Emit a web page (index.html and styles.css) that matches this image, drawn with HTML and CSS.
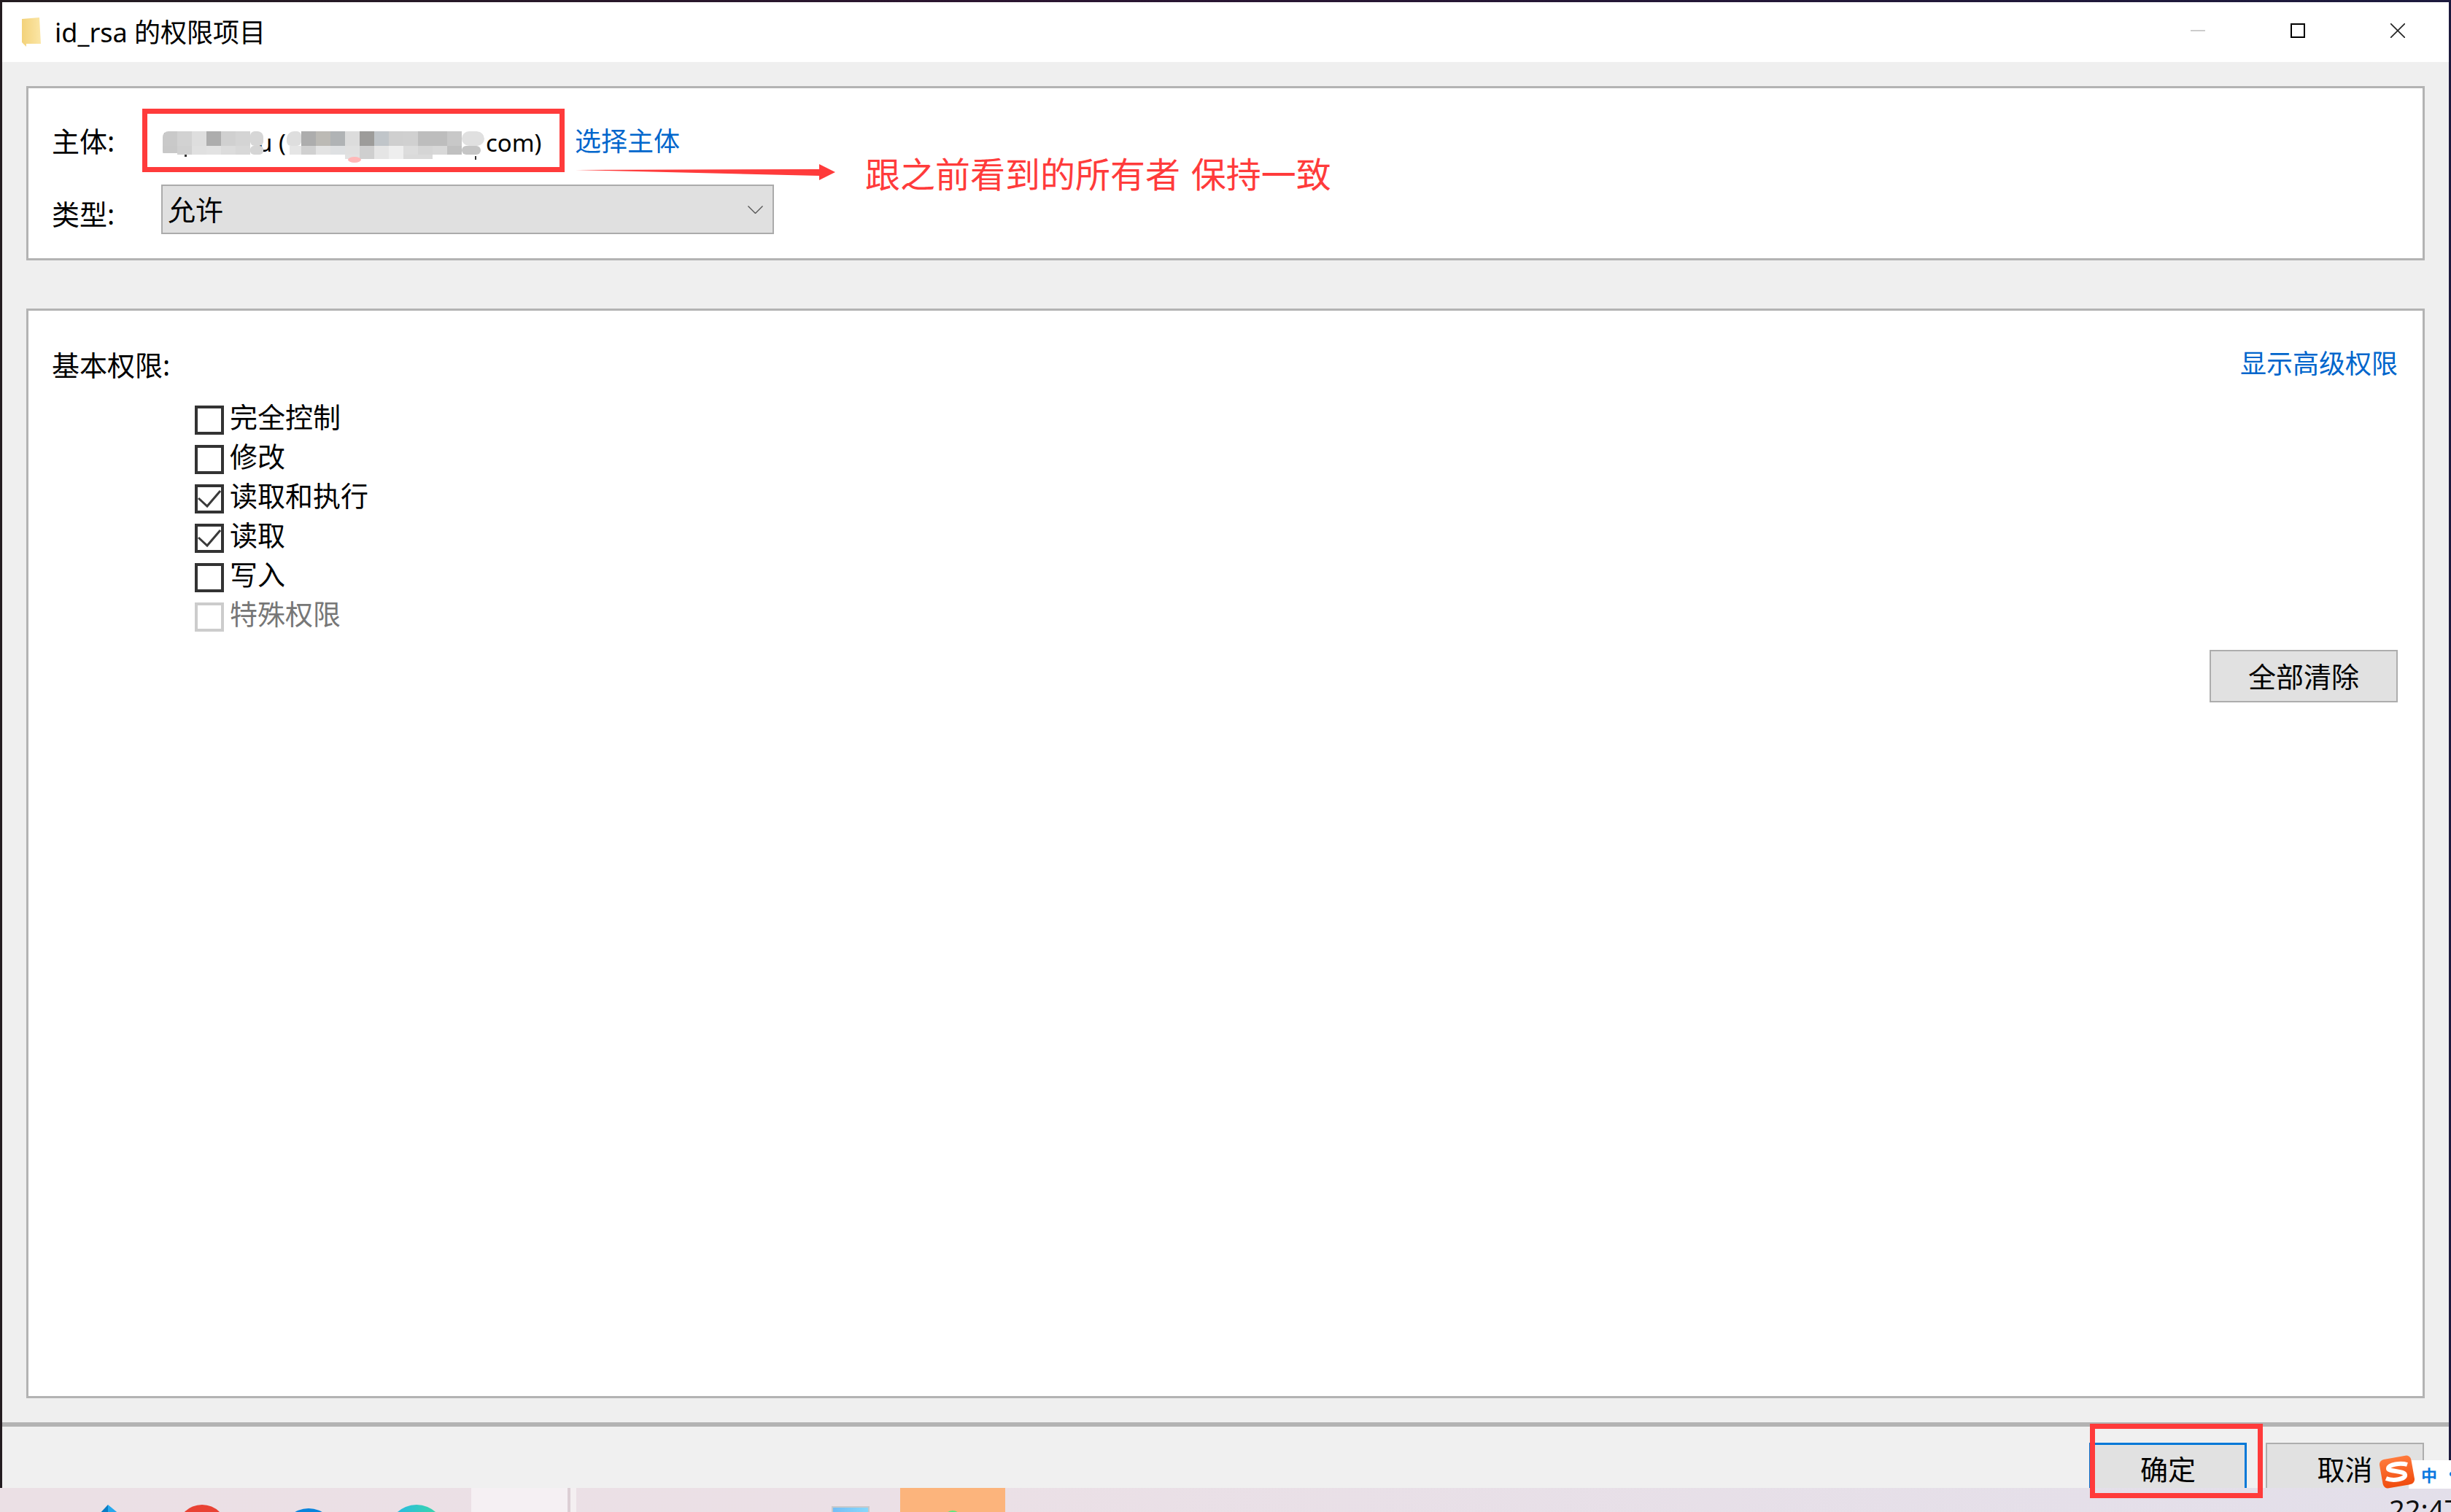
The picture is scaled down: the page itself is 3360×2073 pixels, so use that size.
FILE: index.html
```html
<!DOCTYPE html>
<html lang="zh-CN">
<head>
    <meta charset="UTF-8">
    <title>id_rsa 的权限项目</title>
    <link rel="stylesheet" href="styles.css">
</head>
<body>
<div class="desktop">
    <div class="window">
        <div class="titlebar">
            <svg class="folder" width="26" height="40" viewBox="0 0 26 40">
                <defs>
                    <linearGradient id="folderFill" x1="0" x2="1" y1="0" y2="0">
                        <stop offset="0" stop-color="#f3d27a"/>
                        <stop offset="1" stop-color="#fbe6a6"/>
                    </linearGradient>
                </defs>
                <polygon points="0,2 24,0 26,36 6,36 6,40 0,34" fill="url(#folderFill)"/>
            </svg>
            <span class="title">id_rsa 的权限项目</span>
            <div class="win-btn">
                <svg width="20" height="20" viewBox="0 0 20 20"><rect x="0" y="9" width="20" height="2" fill="#ccc"/></svg>
            </div>
            <div class="win-btn">
                <svg width="20" height="20" viewBox="0 0 20 20"><rect x="1" y="1" width="18" height="18" fill="none" stroke="#000" stroke-width="2"/></svg>
            </div>
            <div class="win-btn">
                <svg width="20" height="20" viewBox="0 0 20 20"><path d="M0 0L20 20M20 0L0 20" stroke="#222" stroke-width="1.6"/></svg>
            </div>
        </div>

        <div class="content">
            <div class="panel panel-top">
                <div class="form-row">
                    <span class="label label-who">主体:</span>
                    <div class="who">
                        <svg class="mosaic" width="138" height="36" viewBox="0 0 138 36">
                            <rect x="2" y="2" width="4" height="3" fill="#333"/><rect x="30" y="30" width="3" height="5" fill="#333"/>
                            <g class="mosaic-cells">
                                <rect x="0" width="20" height="20" fill="#c9c9c9"/><rect x="20" width="20" height="20" fill="#d2d2d2"/>
                                <rect x="40" width="20" height="20" fill="#dedede"/><rect x="60" width="20" height="20" fill="#adadad"/>
                                <rect x="80" width="20" height="20" fill="#d0d0d0"/><rect x="100" width="20" height="20" fill="#d4d4d4"/>
                                <rect x="120" width="18" height="20" rx="6" fill="#d6d6d6"/>
                                <rect x="0" y="20" width="20" height="10" fill="#c8c8c8"/><rect x="20" y="20" width="20" height="12" fill="#d0d0d0"/>
                                <rect x="40" y="20" width="20" height="12" fill="#e0e0e0"/><rect x="60" y="20" width="20" height="12" fill="#e2e2e2"/>
                                <rect x="80" y="20" width="20" height="12" fill="#dcdcdc"/><rect x="100" y="20" width="20" height="12" fill="#d8d8d8"/>
                                <rect x="120" y="20" width="18" height="12" rx="5" fill="#d5d5d5"/>
                            </g>
                        </svg>
                        <span class="who-mid">u (</span>
                        <svg class="mosaic-wide" width="271" height="44" viewBox="0 0 271 44">
                            <rect x="258" y="34" width="2" height="5" fill="#333"/>
                            <rect x="0" width="20" height="20" rx="6" fill="#dedede"/><rect x="20" width="20" height="20" fill="#adadad"/>
                            <rect x="40" width="20" height="20" fill="#bcbab5"/><rect x="60" width="20" height="20" fill="#b0b3b5"/>
                            <rect x="80" width="20" height="20" fill="#dcdcdc"/><rect x="100" width="20" height="20" fill="#9d9c9a"/>
                            <rect x="120" width="20" height="20" fill="#c0c5c9"/><rect x="140" width="20" height="20" fill="#cfcfcf"/>
                            <rect x="160" width="20" height="20" fill="#d0d0d0"/><rect x="180" width="20" height="20" fill="#bdbdbd"/>
                            <rect x="200" width="20" height="20" fill="#bdbdbd"/><rect x="220" width="20" height="20" fill="#c8c8c8"/>
                            <rect x="240" rx="10" width="31" height="20" fill="#e0e0e0"/>
                            <rect x="4" y="20" width="16" height="12" fill="#e5e5e5"/><rect x="20" y="20" width="20" height="12" fill="#d0d0d0"/>
                            <rect x="40" y="20" width="20" height="12" fill="#e3e3e3"/><rect x="60" y="20" width="20" height="12" fill="#dee0e2"/>
                            <rect x="80" y="20" width="20" height="12" fill="#e0e0e0"/><rect x="100" y="20" width="20" height="12" fill="#cfcfcf"/>
                            <rect x="120" y="20" width="20" height="12" fill="#e5e5e5"/><rect x="140" y="20" width="20" height="12" fill="#eee"/>
                            <rect x="160" y="20" width="20" height="12" fill="#dcdcdc"/><rect x="180" y="20" width="20" height="12" fill="#d5d5d5"/>
                            <rect x="200" y="20" width="20" height="12" fill="#d8d8d8"/><rect x="220" y="20" width="20" height="12" fill="#c0c0c0"/>
                            <rect x="240" y="20" width="26" height="12" rx="6" fill="#c5c5c5"/>
                            <rect x="80" y="32" width="20" height="6" fill="#e2e2e2"/><rect x="100" y="32" width="20" height="6" fill="#cfcfcf"/>
                            <rect x="120" y="32" width="20" height="6" fill="#e5e5e5"/><rect x="140" y="32" width="20" height="6" fill="#eee"/>
                            <rect x="160" y="32" width="40" height="6" fill="#dadada"/>
                            <ellipse cx="93" cy="39" rx="9" ry="4" fill="#ffb8b8"/>
                        </svg>
                        <span class="who-end">com)</span>
                    </div>
                    <a class="link pick-link">选择主体</a>
                </div>
                <div class="form-row form-row-type">
                    <span class="label label-type">类型:</span>
                    <div class="select">
                        <span class="select-value">允许</span>
                        <svg width="21" height="11" viewBox="0 0 21 11"><path d="M0.5 0.5L10.5 10.5L20.5 0.5" fill="none" stroke="#555" stroke-width="1.4"/></svg>
                    </div>
                </div>
            </div>

            <div class="panel panel-main">
                <div class="perm-head">
                    <span class="label perm-title">基本权限:</span>
                    <a class="link perm-more">显示高级权限</a>
                </div>
                <ul class="perm-list">
                    <li class="perm"><span class="box"></span><span>完全控制</span></li>
                    <li class="perm"><span class="box"></span><span>修改</span></li>
                    <li class="perm">
                        <span class="box"><svg width="32" height="32" viewBox="0 0 32 32"><path d="M1 15L13 26L31 5" fill="none" stroke="#3a3a3a" stroke-width="3"/></svg></span>
                        <span>读取和执行</span>
                    </li>
                    <li class="perm">
                        <span class="box"><svg width="32" height="32" viewBox="0 0 32 32"><path d="M1 15L13 26L31 5" fill="none" stroke="#3a3a3a" stroke-width="3"/></svg></span>
                        <span>读取</span>
                    </li>
                    <li class="perm"><span class="box"></span><span>写入</span></li>
                    <li class="perm perm-disabled"><span class="box"></span><span>特殊权限</span></li>
                </ul>
                <button class="btn btn-clear" type="button">全部清除</button>
            </div>
        </div>

        <div class="separator"></div>
        <div class="footer">
            <button class="btn btn-ok" type="button">确定</button>
            <button class="btn btn-cancel" type="button">取消</button>
        </div>
    </div>

    <div class="taskbar">
        <svg class="tb-icon tb-arrow" width="30" height="30" viewBox="0 0 30 30">
            <polygon points="13,0 13,30 0,30 0,14" fill="#0a7cc4"/>
            <polygon points="13,0 30,14 30,30 13,30" fill="#27a9ee"/>
        </svg>
        <span class="tb-icon tb-red"></span>
        <span class="tb-icon tb-blue"></span>
        <span class="tb-icon tb-teal"></span>
        <span class="tb-active"></span>
        <span class="tb-sep"></span>
        <span class="tb-icon tb-file"></span>
        <span class="tb-orange"><span class="tb-green"></span></span>
        <span class="clock">22:47</span>
    </div>

    <!-- red marks drawn over the screenshot -->
    <div class="mark mark-who"></div>
    <div class="mark mark-ok"></div>
    <svg class="mark-arrow" width="360" height="32" viewBox="0 0 360 32">
        <polygon points="0,13 334,12 334,5 356,16 334,27 334,21" fill="#ff3b3b"/>
    </svg>
    <div class="note">跟之前看到的所有者 保持一致</div>

    <!-- input method bar -->
    <div class="ime">
        <svg width="48" height="46" viewBox="0 0 48 46">
            <defs>
                <linearGradient id="imeFill" x1="0" x2="0" y1="0" y2="1">
                    <stop offset="0" stop-color="#ff7a3c"/>
                    <stop offset="1" stop-color="#f04c0e"/>
                </linearGradient>
            </defs>
            <rect x="2" y="3" width="44" height="40" rx="7" fill="url(#imeFill)" transform="rotate(-10 24 23)"/>
            <path d="M38 13C28 10 13 13 12 18C11 23 34 21 35 27C36 33 19 36 9 32" fill="none" stroke="#fff" stroke-width="6"/>
        </svg>
        <span class="ime-lang">中</span>
        <span class="ime-dot"></span>
    </div>
</div>
</body>
</html>
```
FILE: styles.css
```css
* {
  box-sizing: border-box;
}

html, body {
  margin: 0;
  padding: 0;
}

body {
  font-family: "Noto Sans", "Noto Sans CJK SC", sans-serif;
  font-size: 38px;
  color: #000;
  overflow: hidden;
}

.desktop {
  position: relative;
  width: 3360px;
  height: 2073px;
  overflow: hidden;
  display: flex;
  flex-direction: column;
  background: linear-gradient(90deg, #231c20, #2b1530 40%, #1c1a3e);
}

.window {
  flex: none;
  height: 2037px;
  margin: 3px 3px 0;
  display: flex;
  flex-direction: column;
  background: #efefef;
}

/* Title bar */
.titlebar {
  flex: none;
  height: 82px;
  display: flex;
  align-items: center;
  padding: 0 1px 0 27px;
  background: #fff;
}

.folder {
  flex: none;
}

.title {
  flex: 1;
  margin: 0 0 3px 19px;
  font-size: 36px;
}

.win-btn {
  width: 137px;
  display: flex;
  justify-content: center;
  padding: 0 2px 4px 0;
}

/* Panels */
.content {
  flex: none;
  padding: 33px 33px 0;
}

.panel {
  background: #fff;
  border: 3px solid #b3b3b3;
}

.panel-top {
  height: 239px;
  padding: 39px 32px 0;
}

.panel-main {
  height: 1494px;
  margin-top: 66px;
  padding: 49px 34px 0 32px;
  display: flex;
  flex-direction: column;
}

.form-row {
  display: flex;
  align-items: center;
  height: 70px;
}

.form-row-type {
  height: 68px;
  margin-top: 23px;
}

.label {
  flex: none;
  width: 150px;
  font-size: 38px;
  white-space: nowrap;
}

.label-who {
  padding-bottom: 8px;
}

.label-type {
  padding-top: 8px;
}

.who {
  flex: none;
  width: 567px;
  padding-left: 2px;
  display: flex;
  align-items: center;
  font-size: 33px;
  white-space: nowrap;
}

.mosaic {
  flex: none;
  position: relative;
  z-index: 1;
  margin-top: 6px;
  border-radius: 8px;
}

.mosaic-wide {
  flex: none;
  margin-top: 14px;
  margin-left: 1px;
  border-radius: 10px;
}

.who-mid {
  flex: none;
  margin-left: -8px;
}

.who-end {
  flex: none;
  margin-left: 2px;
}

.link {
  color: #0066cc;
  font-size: 36px;
}

.pick-link {
  margin-top: -8px;
}

.select {
  width: 840px;
  height: 68px;
  display: flex;
  align-items: center;
  justify-content: space-between;
  padding: 0 13px 0 7px;
  background: #e0e0e0;
  border: 2px solid #ababab;
}

.select-value {
  padding-bottom: 3px;
}

/* Permission list */
.perm-head {
  flex: none;
  height: 50px;
  display: flex;
  align-items: center;
  justify-content: space-between;
}

.perm-title {
  padding-bottom: 4px;
}

.perm-more {
  padding-bottom: 8px;
}

.perm-list {
  flex: none;
  list-style: none;
  margin: 31px 0 0 196px;
  padding: 0;
}

.perm {
  height: 54px;
  display: flex;
  align-items: flex-start;
  gap: 8px;
  line-height: 30px;
}

.box {
  flex: none;
  width: 40px;
  height: 40px;
  border: 4px solid #333;
  background: #fff;
}

.box svg {
  display: block;
}

.perm-disabled {
  color: #777;
}

.perm-disabled .box {
  border-color: #ccc;
}

/* Buttons */
.btn {
  font-family: inherit;
  font-size: 38px;
  color: #000;
  background: #e1e1e1;
  border: 2px solid #adadad;
  padding: 0;
  border-radius: 0;
}

.btn-clear {
  align-self: flex-end;
  width: 258px;
  height: 72px;
  margin-top: 11px;
  padding-bottom: 3px;
}

.separator {
  flex: none;
  height: 6px;
  margin-top: 33px;
  background: #b3b3b3;
}

.footer {
  flex: 1;
  min-height: 0;
  overflow: hidden;
  display: flex;
  justify-content: flex-end;
  align-items: flex-start;
  gap: 26px;
  padding: 22px 34px 0 0;
  background: #f0f0f0;
}

.footer .btn {
  flex: none;
  height: 72px;
  padding-bottom: 4px;
}

.btn-ok {
  width: 216px;
  border: 3px solid #0078d7;
}

.btn-cancel {
  width: 217px;
}

/* Taskbar */
.taskbar {
  flex: none;
  height: 33px;
  display: flex;
  align-items: flex-start;
  overflow: hidden;
  background: linear-gradient(90deg, #ebe0e5, #ebe0e6 40%, #e3dfea);
}

.tb-icon {
  flex: none;
  display: block;
}

.tb-arrow {
  margin: 23px 0 0 135px;
}

.tb-red {
  width: 68px;
  height: 68px;
  margin: 23px 0 0 78px;
  border-radius: 50%;
  background: #e94234;
}

.tb-blue {
  width: 74px;
  height: 74px;
  margin: 28px 0 0 75px;
  border-radius: 50%;
  background: #0a84dc;
}

.tb-teal {
  width: 78px;
  height: 78px;
  margin: 23px 0 0 72px;
  border-radius: 50%;
  background: linear-gradient(90deg, #27b5ec, #3ddba0);
}

.tb-active {
  flex: none;
  width: 132px;
  height: 33px;
  margin-left: 36px;
  background: #f5f0f3;
}

.tb-sep {
  flex: none;
  width: 12px;
  height: 33px;
  border-left: 4px solid #dccfd5;
  background: #f4eff1;
}

.tb-file {
  width: 52px;
  height: 40px;
  margin: 25px 0 0 350px;
  border: 2px solid #c9c9cb;
  background: linear-gradient(90deg, #75bef5, #88d8fb);
}

.tb-orange {
  flex: none;
  display: flex;
  justify-content: center;
  width: 144px;
  height: 33px;
  margin-left: 42px;
  background: #fcb47c;
}

.tb-green {
  width: 24px;
  height: 24px;
  margin-top: 31px;
  border-radius: 50%;
  background: #5ee87c;
}

.clock {
  flex: none;
  margin: 10px 0 0 1897px;
  font-size: 38px;
  line-height: 38px;
  color: #111;
}

/* Annotations */
.mark {
  position: absolute;
  border: 7px solid #ff3b3b;
}

.mark-who {
  left: 195px;
  top: 149px;
  width: 579px;
  height: 87px;
}

.mark-ok {
  left: 2865px;
  top: 1952px;
  width: 237px;
  height: 102px;
}

.mark-arrow {
  position: absolute;
  left: 789px;
  top: 220px;
}

.note {
  position: absolute;
  left: 1186px;
  top: 202px;
  font-family: "Noto Sans CJK SC", sans-serif;
  font-size: 48px;
  line-height: 68px;
  word-spacing: 4px;
  color: #ff3b3b;
  white-space: nowrap;
}

.ime {
  position: absolute;
  left: 3262px;
  top: 1995px;
  width: 98px;
  height: 46px;
  display: flex;
  align-items: center;
  background: linear-gradient(#fff, #fff) 40px 7px / 100% 100% no-repeat;
}

.ime svg {
  flex: none;
}

.ime-lang {
  margin-left: 9px;
  margin-top: 6px;
  font-family: "Noto Sans CJK SC", sans-serif;
  font-size: 22px;
  font-weight: 700;
  line-height: 24px;
  color: #0a78e0;
}

.ime-dot {
  flex: none;
  width: 6px;
  height: 6px;
  margin: 6px 0 0 17px;
  border-radius: 50%;
  background: #0a78e0;
}
```
